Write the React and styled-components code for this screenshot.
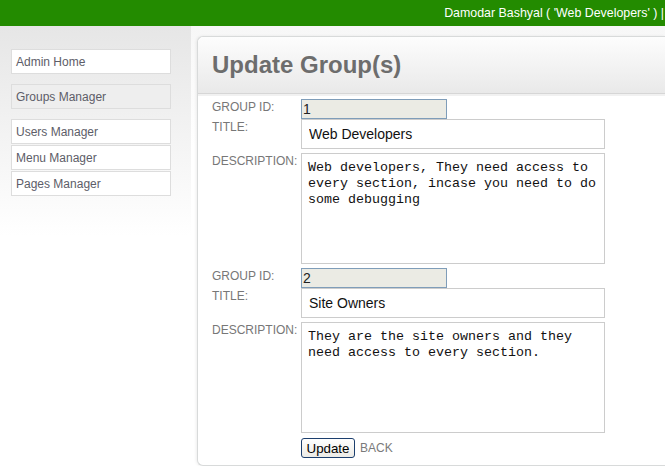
import React from "react";
import styled, { createGlobalStyle } from "styled-components";

const Global = createGlobalStyle`
  html, body {
    margin: 0;
    padding: 0;
    overflow: hidden;
    background: #fff;
  }
  body {
    font-family: "Liberation Sans", Arial, sans-serif;
  }
`;

const Page = styled.div`
  width: 100%;
  min-height: 466px;
  display: flex;
  flex-direction: column;
`;

const TopBar = styled.div`
  height: 26px;
  background: #238b00;
  display: flex;
  justify-content: flex-end;
  align-items: center;
  padding-right: 1px;
  color: #fff;
  font-size: 12.4px;
  white-space: nowrap;
`;

const Body = styled.div`
  flex: 1;
  display: flex;
  background: linear-gradient(#f7f7f7, #ffffff 120px);
`;

const Sidebar = styled.nav`
  width: 191px;
  flex: none;
  box-sizing: border-box;
  padding: 23px 0 0 11px;
  background: linear-gradient(#e6e6e6, #ffffff 210px);
  display: flex;
  flex-direction: column;
  gap: 10px;
`;

const NavGroup = styled.div`
  display: flex;
  flex-direction: column;
  gap: 1px;
`;

const NavItem = styled.a`
  display: block;
  box-sizing: border-box;
  width: 160px;
  height: 25px;
  line-height: 24px;
  padding-left: 4px;
  border: 1px solid #dddddd;
  background: ${(p) => (p.$active ? "#eeeeee" : "#ffffff")};
  color: #5d5d68;
  font-size: 12px;
  text-decoration: none;
`;

const Main = styled.main`
  flex: 1;
  min-width: 0;
  padding: 10px 0 0 6px;
  display: flex;
  flex-direction: column;
`;

const Panel = styled.section`
  flex: 1;
  border: 1px solid #d8dada;
  border-right: none;
  border-radius: 6px 0 0 6px;
  background: #fff;
  box-shadow: -1px 0 3px rgba(0, 0, 0, 0.07);
  display: flex;
  flex-direction: column;
`;

const PanelHeader = styled.header`
  height: 56px;
  display: flex;
  align-items: center;
  padding-left: 14px;
  border-bottom: 1px solid #d6d6d6;
  border-radius: 6px 0 0 0;
  background: linear-gradient(#fdfdfd, #e9e9e9);
  box-shadow: 0 2px 0 #f1f1f1;
`;

const Title = styled.h1`
  margin: 0;
  font-size: 24px;
  line-height: 1;
  font-weight: bold;
  color: #6d6d6d;
`;

const Form = styled.form`
  padding: 5px 14px 5px 14px;
  display: flex;
  flex-direction: column;
`;

const Row = styled.div`
  display: flex;
  align-items: flex-start;
  margin-bottom: ${(p) => p.$gap || 0}px;
`;

const Label = styled.label`
  width: 89px;
  flex: none;
  font-size: 12px;
  line-height: 16px;
  color: #777;
`;

const IdInput = styled.input`
  box-sizing: border-box;
  width: 146px;
  height: 20px;
  margin: 0;
  padding: 0 1px;
  border: 1px solid #7f9db9;
  background: #ebebe4;
  font-family: "Liberation Sans", Arial, sans-serif;
  font-size: 14px;
  color: #222;
  outline: none;
`;

const TextInput = styled.input`
  box-sizing: border-box;
  width: 304px;
  height: 30px;
  margin: 0;
  padding: 0 7px;
  border: 1px solid #cccccc;
  background: #fff;
  font-family: "Liberation Sans", Arial, sans-serif;
  font-size: 14px;
  color: #111;
  outline: none;
`;

const TextArea = styled.textarea`
  box-sizing: border-box;
  width: 304px;
  height: 111px;
  margin: 0;
  padding: 6px 6px;
  border: 1px solid #cccccc;
  background: #fff;
  font-family: "Liberation Mono", "Courier New", monospace;
  font-size: 13.33px;
  line-height: 16px;
  color: #111;
  resize: none;
  overflow: hidden;
  outline: none;
  display: block;
`;

const Actions = styled.div`
  display: flex;
  align-items: center;
  gap: 5px;
  margin-left: 89px;
`;

const Button = styled.button`
  box-sizing: border-box;
  height: 20px;
  width: 54px;
  padding: 0;
  border: 1px solid #1c3f6e;
  border-radius: 3px;
  background: linear-gradient(#ffffff, #ecebe6);
  font-family: "Liberation Sans", Arial, sans-serif;
  font-size: 13.33px;
  color: #000;
`;

const BackLink = styled.a`
  font-size: 12px;
  color: #7a7a7a;
  text-decoration: none;
`;

const groups = [
  {
    id: "1",
    title: "Web Developers",
    description:
      "Web developers, They need access to every section, incase you need to do some debugging",
  },
  {
    id: "2",
    title: "Site Owners",
    description:
      "They are the site owners and they need access to every section.",
  },
];

function GroupFields({ group, last }) {
  return (
    <>
      <Row>
        <Label>GROUP ID:</Label>
        <IdInput readOnly defaultValue={group.id} />
      </Row>
      <Row $gap={4}>
        <Label>TITLE:</Label>
        <TextInput defaultValue={group.title} />
      </Row>
      <Row $gap={last ? 5 : 4}>
        <Label>DESCRIPTION:</Label>
        <TextArea defaultValue={group.description} spellCheck={false} />
      </Row>
    </>
  );
}

export default function App() {
  return (
    <>
      <Global />
      <Page>
        <TopBar>Damodar Bashyal ( 'Web Developers' ) |</TopBar>
        <Body>
          <Sidebar>
            <NavGroup>
              <NavItem href="#">Admin Home</NavItem>
            </NavGroup>
            <NavGroup>
              <NavItem href="#" $active>
                Groups Manager
              </NavItem>
            </NavGroup>
            <NavGroup>
              <NavItem href="#">Users Manager</NavItem>
              <NavItem href="#">Menu Manager</NavItem>
              <NavItem href="#">Pages Manager</NavItem>
            </NavGroup>
          </Sidebar>
          <Main>
            <Panel>
              <PanelHeader>
                <Title>Update Group(s)</Title>
              </PanelHeader>
              <Form onSubmit={(e) => e.preventDefault()}>
                {groups.map((g, i) => (
                  <GroupFields key={g.id} group={g} last={i === groups.length - 1} />
                ))}
                <Actions>
                  <Button type="submit">Update</Button>
                  <BackLink href="#">BACK</BackLink>
                </Actions>
              </Form>
            </Panel>
          </Main>
        </Body>
      </Page>
    </>
  );
}
